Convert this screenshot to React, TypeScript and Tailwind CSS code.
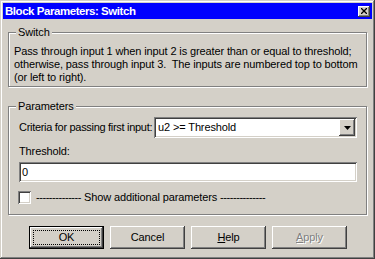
import React from "react";

const raised =
  "shadow-[inset_-1px_-1px_0_#404040,inset_1px_1px_0_#ffffff,inset_-2px_-2px_0_#808080,inset_2px_2px_0_#d4d0c8]";
const sunken =
  "shadow-[inset_1px_1px_0_#808080,inset_-1px_-1px_0_#ffffff,inset_2px_2px_0_#404040,inset_-2px_-2px_0_#d4d0c8]";
const etched = "border border-[#808080] shadow-[inset_1px_1px_0_#ffffff,1px_1px_0_#ffffff]";

function Button({ children, def, disabled }: { children: React.ReactNode; def?: boolean; disabled?: boolean }) {
  if (def) {
    return (
      <div className="w-[75px] h-[23px] border border-black flex">
        <div className={`flex-1 flex items-center justify-center p-[3px] ${raised}`}>
          <div className="w-full h-full border border-dotted border-black flex items-center justify-center">
            {children}
          </div>
        </div>
      </div>
    );
  }
  return (
    <div
      className={`w-[75px] h-[23px] flex items-center justify-center ${raised} ${
        disabled ? "text-[#808080] [text-shadow:1px_1px_0_#ffffff]" : ""
      }`}
    >
      {children}
    </div>
  );
}

export default function App() {
  return (
    <div className="w-[375px] h-[259px] bg-[#d4d0c8] p-[3px] flex flex-col text-[11px] leading-[13px] tracking-[-0.12px] text-black font-['Liberation_Sans',Arial,sans-serif] shadow-[inset_-1px_-1px_0_#404040,inset_1px_1px_0_#d4d0c8,inset_-2px_-2px_0_#808080,inset_2px_2px_0_#ffffff]">
      <div className="h-[16px] bg-[#0000ff] flex items-center justify-between pl-[2px] pr-[2px]">
        <span className="text-white font-bold text-[11.5px] leading-[16px] tracking-[-0.45px]">
          Block Parameters: Switch
        </span>
        <div className={`w-[12px] h-[11px] bg-[#d4d0c8] flex items-center justify-center ${raised}`}>
          <svg width="6" height="6" viewBox="0 0 6 6">
            <path d="M0 0L6 6M6 0L0 6" stroke="black" strokeWidth="1.3" />
          </svg>
        </div>
      </div>

      <div className="flex flex-col px-[5px] pt-[13px]">
        <div className={`relative ${etched} pl-[5px] pr-[4px] pt-[12px] pb-[2px] h-[55px]`}>
          <span className="absolute -top-[7px] left-[7px] bg-[#d4d0c8] px-[2px]">Switch</span>
          <p>
            Pass through input 1 when input 2 is greater than or equal to threshold; otherwise, pass through input 3.&nbsp; The inputs are numbered top to bottom (or left to right).
          </p>
        </div>

        <div className={`relative ${etched} mt-[19px] h-[109px] pl-[10px] pr-[9px] pt-[10px]`}>
          <span className="absolute -top-[7px] left-[7px] bg-[#d4d0c8] px-[2px]">Parameters</span>
          <div className="flex items-center justify-between">
            <span className="whitespace-nowrap tracking-[-0.3px]">Criteria for passing first input:</span>
            <div className={`w-[203px] shrink-0 h-[21px] bg-white p-[2px] flex items-center ${sunken}`}>
              <span className="flex-1 pl-[2px]">u2 &gt;= Threshold</span>
              <div className={`w-[16px] h-[17px] bg-[#d4d0c8] flex items-center justify-center ${raised}`}>
                <svg width="7" height="4" viewBox="0 0 7 4">
                  <path d="M0 0H7L3.5 4Z" fill="black" />
                </svg>
              </div>
            </div>
          </div>
          <div className="mt-[7px]">Threshold:</div>
          <div className={`mt-[4px] h-[20px] bg-white flex items-center pl-[3px] ${sunken}`}>0</div>
          <div className="mt-[9px] flex items-center gap-[5px] -ml-[1px]">
            <div className={`w-[13px] h-[13px] bg-white ${sunken}`} />
            <span className="whitespace-nowrap">
              <span className="tracking-[-0.45px]">--------------</span> Show additional parameters{" "}
              <span className="tracking-[-0.45px]">--------------</span>
            </span>
          </div>
        </div>

        <div className="mt-[11px] flex gap-[6px] pl-[21px]">
          <Button def>OK</Button>
          <Button>Cancel</Button>
          <Button>
            <span>
              <span className="underline">H</span>elp
            </span>
          </Button>
          <Button disabled>
            <span>
              <span className="underline">A</span>pply
            </span>
          </Button>
        </div>
      </div>
    </div>
  );
}
